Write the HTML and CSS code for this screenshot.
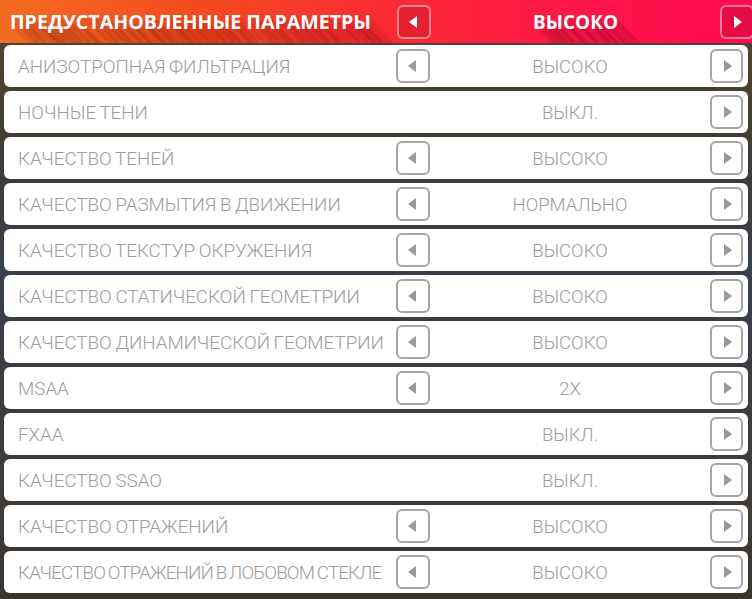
FILE: index.html
```html
<!DOCTYPE html>
<html>
<head>
<meta charset="utf-8">
<link rel="stylesheet" href="styles.css">
</head>
<body>
<div class="screen">
  <header class="head">
    <div class="head-title">ПРЕДУСТАНОВЛЕННЫЕ ПАРАМЕТРЫ</div>
    <button class="hbtn"><span class="tri tri-left"></span></button>
    <div class="head-value">ВЫСОКО</div>
    <button class="hbtn"><span class="tri tri-right"></span></button>
  </header>
  <div class="rows">
    <div class="row"><div class="label">АНИЗОТРОПНАЯ ФИЛЬТРАЦИЯ</div><button class="btn"><span class="tri tri-left"></span></button><div class="value">ВЫСОКО</div><button class="btn"><span class="tri tri-right"></span></button></div>
    <div class="row"><div class="label">НОЧНЫЕ ТЕНИ</div><button class="btn hidden"><span class="tri tri-left"></span></button><div class="value">ВЫКЛ.</div><button class="btn"><span class="tri tri-right"></span></button></div>
    <div class="row"><div class="label">КАЧЕСТВО ТЕНЕЙ</div><button class="btn"><span class="tri tri-left"></span></button><div class="value">ВЫСОКО</div><button class="btn"><span class="tri tri-right"></span></button></div>
    <div class="row"><div class="label">КАЧЕСТВО РАЗМЫТИЯ В ДВИЖЕНИИ</div><button class="btn"><span class="tri tri-left"></span></button><div class="value">НОРМАЛЬНО</div><button class="btn"><span class="tri tri-right"></span></button></div>
    <div class="row"><div class="label">КАЧЕСТВО ТЕКСТУР ОКРУЖЕНИЯ</div><button class="btn"><span class="tri tri-left"></span></button><div class="value">ВЫСОКО</div><button class="btn"><span class="tri tri-right"></span></button></div>
    <div class="row"><div class="label">КАЧЕСТВО СТАТИЧЕСКОЙ ГЕОМЕТРИИ</div><button class="btn"><span class="tri tri-left"></span></button><div class="value">ВЫСОКО</div><button class="btn"><span class="tri tri-right"></span></button></div>
    <div class="row"><div class="label">КАЧЕСТВО ДИНАМИЧЕСКОЙ ГЕОМЕТРИИ</div><button class="btn"><span class="tri tri-left"></span></button><div class="value">ВЫСОКО</div><button class="btn"><span class="tri tri-right"></span></button></div>
    <div class="row"><div class="label">MSAA</div><button class="btn"><span class="tri tri-left"></span></button><div class="value">2X</div><button class="btn"><span class="tri tri-right"></span></button></div>
    <div class="row"><div class="label">FXAA</div><button class="btn hidden"><span class="tri tri-left"></span></button><div class="value">ВЫКЛ.</div><button class="btn"><span class="tri tri-right"></span></button></div>
    <div class="row"><div class="label">КАЧЕСТВО SSAO</div><button class="btn hidden"><span class="tri tri-left"></span></button><div class="value">ВЫКЛ.</div><button class="btn"><span class="tri tri-right"></span></button></div>
    <div class="row"><div class="label">КАЧЕСТВО ОТРАЖЕНИЙ</div><button class="btn"><span class="tri tri-left"></span></button><div class="value">ВЫСОКО</div><button class="btn"><span class="tri tri-right"></span></button></div>
    <div class="row"><div class="label label-tight">КАЧЕСТВО ОТРАЖЕНИЙ В ЛОБОВОМ СТЕКЛЕ</div><button class="btn"><span class="tri tri-left"></span></button><div class="value">ВЫСОКО</div><button class="btn"><span class="tri tri-right"></span></button></div>
  </div>
</div>
</body>
</html>
```

FILE: styles.css
```css
* { box-sizing: border-box; }
html, body {
  margin: 0;
  padding: 0;
  width: 752px;
  height: 599px;
  overflow: hidden;
}
body {
  font-family: Roboto, "Noto Sans", sans-serif;
  background: linear-gradient(180deg, #54472f 0%, #3f3b35 25%, #394049 45%, #3a3d42 65%, #403b34 85%, #3a352f 100%);
}
.screen {
  width: 752px;
  height: 599px;
  overflow: hidden;
}
.head {
  height: 43px;
  display: grid;
  grid-template-columns: 397px 34px 1fr 34px;
  align-items: center;
  background: linear-gradient(90deg, #f46c22 0%, #f3481f 28%, #fb2c33 50%, #ff1747 75%, #ff0a52 100%);
  width: 754px;
  overflow: hidden;
  margin-bottom: 2px;
}
.head-title, .head-value {
  color: #fff;
  font-family: "Open Sans", sans-serif;
  font-weight: 700;
  font-size: 19px;
  white-space: nowrap;
  text-shadow:
    1px 1px 0 rgba(90,0,10,.05), 2px 2px 0 rgba(90,0,10,.05), 3px 3px 0 rgba(90,0,10,.05),
    4px 4px 0 rgba(90,0,10,.05), 5px 5px 0 rgba(90,0,10,.05), 6px 6px 0 rgba(90,0,10,.05),
    7px 7px 0 rgba(90,0,10,.05), 8px 8px 0 rgba(90,0,10,.05), 9px 9px 0 rgba(90,0,10,.05),
    10px 10px 0 rgba(90,0,10,.05), 11px 11px 0 rgba(90,0,10,.05), 12px 12px 0 rgba(90,0,10,.05),
    13px 13px 0 rgba(90,0,10,.05), 14px 14px 0 rgba(90,0,10,.05), 15px 15px 0 rgba(90,0,10,.05),
    16px 16px 0 rgba(90,0,10,.05), 17px 17px 0 rgba(90,0,10,.05), 18px 18px 0 rgba(90,0,10,.05),
    19px 19px 0 rgba(90,0,10,.05), 20px 20px 0 rgba(90,0,10,.05), 21px 21px 0 rgba(90,0,10,.05),
    22px 22px 0 rgba(90,0,10,.05), 23px 23px 0 rgba(90,0,10,.05), 24px 24px 0 rgba(90,0,10,.05);
}
.head-title {
  padding-left: 10px;
  font-size: 19.6px;
}
.head-value {
  text-align: center;
}
.hbtn {
  width: 34px;
  height: 34px;
  padding: 0;
  border: 2px solid rgba(255, 255, 255, 0.45);
  border-radius: 6px;
  background: rgba(150, 10, 30, 0.25);
  display: flex;
  align-items: center;
  justify-content: center;
}
.hbtn .tri-left { border-right-color: #fff; }
.hbtn .tri-right { border-left-color: #fff; }
.rows {
  padding: 0 4px;
  display: flex;
  flex-direction: column;
  gap: 4px;
}
.row {
  height: 42px;
  background: #fff;
  border-radius: 6px;
  display: grid;
  grid-template-columns: 378px 34px 1fr 33px;
  align-items: center;
  padding: 0 5px 0 14px;
}
.label {
  color: #9c9c9c;
  font-size: 18.8px;
  font-weight: 300;
  word-spacing: -1px;
  white-space: nowrap;
  overflow: hidden;
  padding-top: 1px;
}
.label-tight {
  letter-spacing: -0.85px;
  word-spacing: -1px;
}
.value {
  color: #9c9c9c;
  font-size: 18.5px;
  font-weight: 300;
  text-align: center;
  padding-top: 1px;
}
.btn {
  width: 100%;
  height: 34px;
  padding: 0;
  border: 2px solid #a5a5a5;
  border-radius: 6px;
  background: #fff;
  display: flex;
  align-items: center;
  justify-content: center;
}
.btn.hidden { visibility: hidden; }
.tri {
  width: 0;
  height: 0;
  border-top: 6px solid transparent;
  border-bottom: 6px solid transparent;
}
.tri-left {
  border-right: 8px solid #999;
  margin-left: -2px;
}
.tri-right {
  border-left: 8px solid #999;
  margin-left: 2px;
}
```
